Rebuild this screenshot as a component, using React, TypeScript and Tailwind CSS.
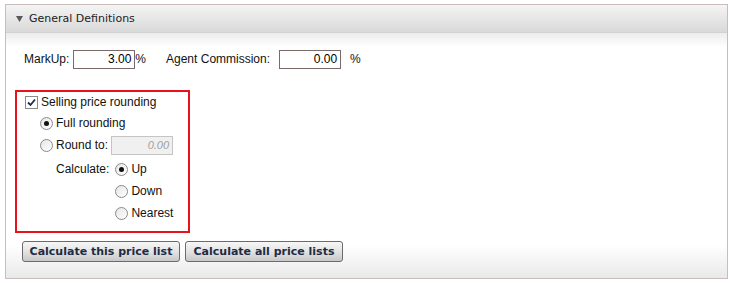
import React from 'react';

const Radio = ({ checked }: { checked?: boolean }) => (
    <span className="flex h-[13px] w-[13px] shrink-0 items-center justify-center rounded-full border border-[#8a8a8a] bg-gradient-to-br from-[#e6e6e6] to-white">
        {checked && <span className="h-[5px] w-[5px] rounded-full bg-[#111]" />}
    </span>
);

const Checkbox = () => (
    <span className="flex h-[13px] w-[13px] shrink-0 items-center justify-center border border-[#8a8a8a] bg-white">
        <svg width="9" height="9" viewBox="0 0 9 9">
            <path d="M1 4.5 L3.5 7 L8 1.5" fill="none" stroke="#1c2e4a" strokeWidth="1.8" />
        </svg>
    </span>
);

const NumberBox = ({ value }: { value: string }) => (
    <div className="flex h-[19px] w-[62px] items-center justify-end border border-[#7b6a6a] bg-white pr-[3px] text-[12px] text-black">
        {value}
    </div>
);

const Button = ({ label }: { label: string }) => (
    <button className="h-[21px] w-[158px] rounded-[3px] border border-[#6b6b6b] bg-gradient-to-b from-[#f7f7f7] via-[#e3e3e3] to-[#c8c8c8] font-['DejaVu_Sans',sans-serif] text-[11px] leading-none font-bold text-[#1d2b44]">
        {label}
    </button>
);

export default function App() {
    return (
        <div className="h-[283px] w-[730px] bg-white pt-[4px] pl-[5px] font-['Liberation_Sans',Arial,sans-serif] text-[12px] leading-[15px] text-[#111]">
            <div className="flex h-[275px] w-[723px] flex-col border border-[#cbbcbc] bg-gradient-to-b from-white via-white via-[88%] to-[#e9e9e9]">
                {/* header */}
                <div className="flex h-[28px] shrink-0 items-center gap-[6px] border-b border-[#d2d2d2] bg-gradient-to-b from-[#f4f4f4] to-[#d9d9d9] pl-[10px] font-['DejaVu_Sans',sans-serif] text-[11px] text-[#222]">
                    <svg width="7" height="6" viewBox="0 0 7 6">
                        <path d="M0 0 H7 L3.5 6 Z" fill="#5a5a5a" />
                    </svg>
                    <span>General Definitions</span>
                </div>
                <div className="flex flex-1 flex-col bg-gradient-to-b from-[#ececec] to-transparent to-[14px]">
                    {/* markup + commission */}
                    <div className="mt-[17px] flex items-center pl-[18px]">
                        <span className="mr-[4px]">MarkUp:</span>
                        <NumberBox value="3.00" />
                        <span>%</span>
                        <span className="mr-[9px] ml-[20px]">Agent Commission:</span>
                        <NumberBox value="0.00" />
                        <span className="ml-[9px]">%</span>
                    </div>

                    {/* rounding box */}
                    <div className="mt-[21px] ml-[9px] flex h-[143px] w-[175px] flex-col border-2 border-[#e8121b] pt-[3px] pl-[8px]">
                        <div className="flex items-center gap-[3px]">
                            <Checkbox />
                            <span>Selling price rounding</span>
                        </div>
                        <div className="mt-[6px] ml-[15px] flex items-center gap-[3px]">
                            <Radio checked />
                            <span>Full rounding</span>
                        </div>
                        <div className="mt-[5px] ml-[15px] flex items-center gap-[3px]">
                            <Radio />
                            <span>Round to:</span>
                            <div className="flex h-[19px] w-[62px] items-center justify-end border border-[#c4c4c4] bg-[#f0f0f0] pr-[3px] text-[11px] text-[#a0a0a0] italic">
                                0.00
                            </div>
                        </div>
                        <div className="mt-[7px] ml-[31px] flex">
                            <span className="mr-[6px]">Calculate:</span>
                            <div className="flex flex-col gap-[7px]">
                                <div className="flex items-center gap-[3px]">
                                    <Radio checked />
                                    <span>Up</span>
                                </div>
                                <div className="flex items-center gap-[3px]">
                                    <Radio />
                                    <span>Down</span>
                                </div>
                                <div className="flex items-center gap-[3px]">
                                    <Radio />
                                    <span>Nearest</span>
                                </div>
                            </div>
                        </div>
                    </div>

                    {/* buttons */}
                    <div className="mt-[8px] ml-[16px] flex gap-[5px]">
                        <Button label="Calculate this price list" />
                        <Button label="Calculate all price lists" />
                    </div>
                </div>
            </div>
        </div>
    );
}
